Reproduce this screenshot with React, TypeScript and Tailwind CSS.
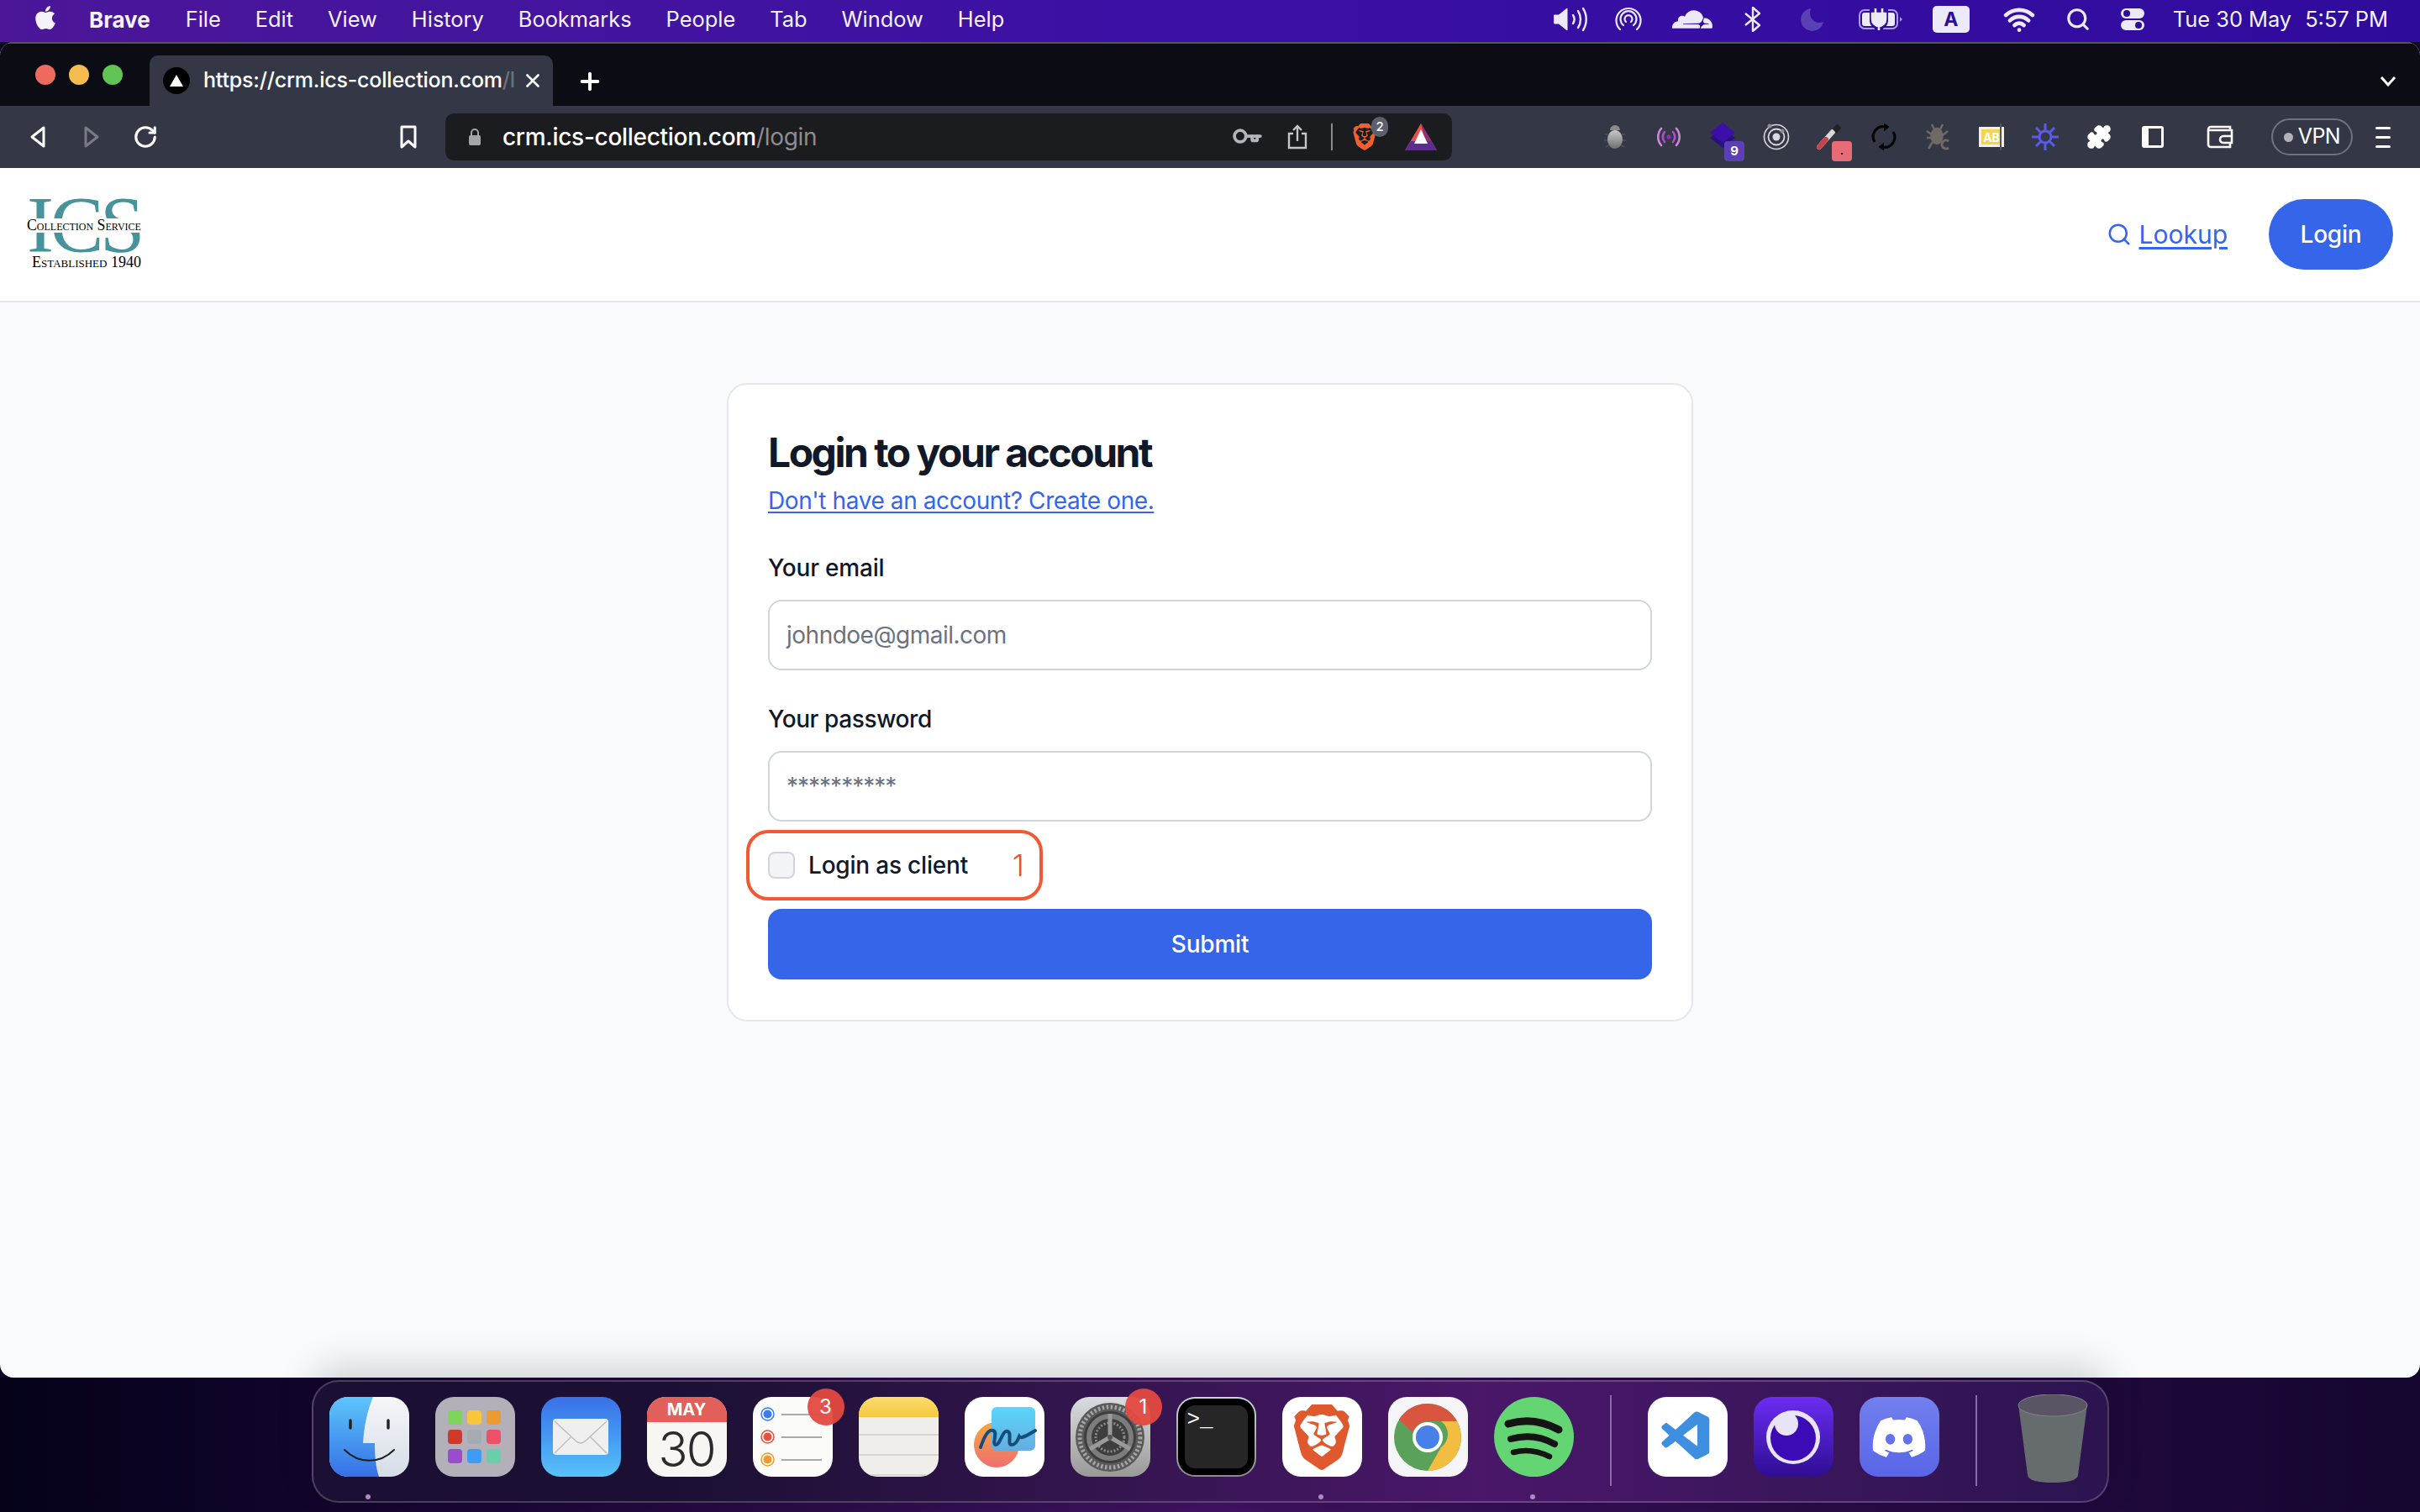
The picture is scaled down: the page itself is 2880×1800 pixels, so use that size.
import { Key, Plus, Puzzle, RotateCw, Search, Wifi, X } from 'lucide-react'
import { FaApple, FaDiscord } from 'react-icons/fa'
import { SiBrave, SiCloudflare } from 'react-icons/si'
import { VscVscode } from 'react-icons/vsc'
import type { ReactNode } from 'react'

const menuItems = ['File', 'Edit', 'View', 'History', 'Bookmarks', 'People', 'Tab', 'Window', 'Help']

function Speaker() {
  return (
    <svg width="41" height="30" viewBox="0 0 41 30" fill="none" stroke="#ece9f8" strokeWidth="2.4" strokeLinecap="round">
      <path d="M1 10h5l10-8v26L6 20H1z" fill="#ece9f8" strokeWidth="1" strokeLinejoin="round" />
      <path d="M23 10c2 3 2 7 0 10M29 5c4 6 4 14 0 20M35 2c5 8 5 18 0 26" />
    </svg>
  )
}

function AirDrop() {
  return (
    <svg width="32" height="30" viewBox="0 0 32 30" fill="none" stroke="#ece9f8" strokeWidth="2.2" strokeLinecap="round">
      <path d="M6 27a14.5 14.5 0 1 1 20 0" />
      <path d="M10 22a9.5 9.5 0 1 1 12 0" />
      <path d="M13 18a4.5 4.5 0 1 1 6 0" />
    </svg>
  )
}

function BluetoothMark() {
  return (
    <svg width="20" height="30" viewBox="0 0 20 30" fill="none" stroke="#ece9f8" strokeWidth="2.4" strokeLinejoin="round">
      <path d="M1 8l17 14-8 7V1l8 7L1 22" />
    </svg>
  )
}

function MoonMark() {
  return (
    <svg width="28" height="28" viewBox="0 0 28 28">
      <path d="M12 1A13.5 13.5 0 1 0 27 17C18 21 8 13 12 1z" fill="#5a40b5" />
    </svg>
  )
}

function Battery() {
  return (
    <svg width="52" height="26" viewBox="0 0 52 26" fill="none">
      <rect x="1" y="2" width="45" height="22" rx="6" stroke="#a89ce0" strokeWidth="2" />
      <rect x="4" y="5" width="39" height="16" rx="3" fill="#ece9f8" />
      <path d="M49 10l3 3-3 3z" fill="#a89ce0" />
      <path d="M13 0h22v15a11 11 0 0 1-6 9v2H19v-2a11 11 0 0 1-6-9z" fill="#2d0c9c" />
      <path d="M20 0v6M28 0v6M16 6h16v7a8 8 0 0 1-16 0zM24 20v6" fill="#ece9f8" stroke="#ece9f8" strokeWidth="2.6" />
    </svg>
  )
}

function ControlCenter() {
  return (
    <svg width="28" height="28" viewBox="0 0 28 28">
      <rect x="0" y="1" width="28" height="12" rx="6" fill="#ece9f8" />
      <circle cx="7" cy="7" r="4" fill="#2d0c9c" />
      <rect x="0" y="15" width="28" height="12" rx="6" fill="#ece9f8" />
      <circle cx="21" cy="21" r="4" fill="#2d0c9c" />
    </svg>
  )
}

function MenuBar() {
  return (
    <div className="h-[50px] shrink-0 flex items-center justify-between pl-[38px] pr-[38px] pb-[4px] bg-gradient-to-r from-[#4b1699] via-[#3a0fa5] to-[#2f0b9c] text-[#f4f2fb] text-[25.4px] font-['Inter',sans-serif]">
      <div className="flex items-center">
        <FaApple size={32} className="mr-[36px] -mt-[4px]" />
        <span className="font-bold text-[26px] mr-[42px]">Brave</span>
        <div className="flex items-center gap-[41px]">
          {menuItems.map((item) => (
            <span key={item}>{item}</span>
          ))}
        </div>
      </div>
      <div className="flex items-center">
        <div className="flex items-center mr-[34px]">
          <Speaker />
          <span className="ml-[32px]"><AirDrop /></span>
          <span className="ml-[36px]"><SiCloudflare size={48} color="#ece9f8" /></span>
          <span className="ml-[38px]"><BluetoothMark /></span>
          <span className="ml-[47px]"><MoonMark /></span>
          <span className="ml-[41px]"><Battery /></span>
          <span className="ml-[36px] w-[44px] h-[32px] rounded-[5px] bg-[#ece9f8] text-[#2d0c9c] text-[23px] font-bold flex items-center justify-center">A</span>
          <span className="ml-[40px]"><Wifi size={38} strokeWidth={3} color="#ece9f8" /></span>
          <span className="ml-[36px]"><Search size={30} strokeWidth={2.5} color="#ece9f8" /></span>
          <span className="ml-[36px]"><ControlCenter /></span>
        </div>
        <div className="flex gap-[16px] whitespace-nowrap">
          <span>Tue 30 May</span>
          <span>5:57 PM</span>
        </div>
      </div>
    </div>
  )
}

function TabStrip() {
  return (
    <div className="h-[76px] shrink-0 bg-[#0c0d14] flex items-end pl-[42px] relative border-t-2 border-[#55565c]">
      <div className="flex gap-[16px] h-[24px] self-center mr-[16px]">
        <span className="w-[24px] h-[24px] rounded-full bg-[#ee6a5f]" />
        <span className="w-[24px] h-[24px] rounded-full bg-[#f5bd4f]" />
        <span className="w-[24px] h-[24px] rounded-full bg-[#61c454]" />
      </div>
      <div className="w-[480px] h-[60px] ml-[16px] bg-[#343846] rounded-t-[10px] flex items-center pl-[16px] text-white text-[25px] font-medium tracking-[-0.2px] font-['Inter',sans-serif]">
        <span className="w-[32px] h-[32px] rounded-full bg-black flex items-center justify-center shrink-0">
          <span className="w-0 h-0 border-x-[8px] border-x-transparent border-b-[14px] border-b-white" />
        </span>
        <span className="w-[368px] ml-[16px] whitespace-nowrap">
          https://crm.ics-collection.com<span className="text-[#6f717a]">/l</span>
        </span>
        <X size={26} strokeWidth={2.5} className="ml-[11px] shrink-0" />
      </div>
      <Plus size={32} strokeWidth={3} color="white" className="ml-[28px] self-center mt-[16px]" />
      <svg className="ml-auto mr-[28px] self-center mt-[16px]" width="20" height="14" viewBox="0 0 20 14" fill="none" stroke="white" strokeWidth="3">
        <path d="M2 2l8 9 8-9" />
      </svg>
    </div>
  )
}

function ExtCell({ children, badge, badgeBg }: { children: ReactNode; badge?: string; badgeBg?: string }) {
  return (
    <div className="w-[64px] h-[40px] flex items-center justify-center relative shrink-0">
      {children}
      {badge && (
        <span className={`absolute -bottom-[9px] right-[6px] w-[24px] h-[24px] rounded-[4px] text-white text-[15px] font-bold flex items-center justify-center ${badgeBg}`}>
          {badge}
        </span>
      )}
    </div>
  )
}

function Toolbar() {
  return (
    <div className="h-[74px] shrink-0 bg-[#343846] flex items-center pl-[13px] font-['Inter',sans-serif]">
      <div className="w-[64px] flex justify-center">
        <svg width="20" height="28" viewBox="0 0 20 28" fill="none" stroke="white" strokeWidth="3" strokeLinejoin="round">
          <path d="M17 3v22L3 14z" />
        </svg>
      </div>
      <div className="w-[64px] flex justify-center">
        <svg width="20" height="28" viewBox="0 0 20 28" fill="none" stroke="#787b86" strokeWidth="3" strokeLinejoin="round">
          <path d="M3 3v22l14-11z" />
        </svg>
      </div>
      <div className="w-[64px] flex justify-center">
        <RotateCw size={30} color="white" strokeWidth={2.5} />
      </div>
      <div className="w-[64px] ml-[249px] flex justify-center">
        <svg width="20" height="28" viewBox="0 0 20 28" fill="none" stroke="white" strokeWidth="3" strokeLinejoin="round">
          <path d="M2 2h16v24l-8-7-8 7z" />
        </svg>
      </div>
      <div className="w-[1198px] h-[56px] ml-[12px] rounded-[10px] bg-[#1b1c20] flex items-center pl-[28px] pr-[18px]">
        <svg width="14" height="20" viewBox="0 0 14 20" fill="#a3a5a9">
          <rect x="0" y="8" width="14" height="12" rx="2" />
          <path d="M3 9V5a4 4 0 0 1 8 0v4" fill="none" stroke="#a3a5a9" strokeWidth="2" />
        </svg>
        <span className="ml-[26px] text-[28px] font-medium tracking-[-0.3px] text-white">
          crm.ics-collection.com<span className="text-[#8b8d93] font-normal">/login</span>
        </span>
        <div className="ml-auto flex items-center">
          <Key size={30} color="#b3b5ba" strokeWidth={3} className="rotate-45 mr-[34px]" />
          <svg width="24" height="30" viewBox="0 0 24 30" fill="none" stroke="#c4c6ca" strokeWidth="2.4" className="mr-[28px]">
            <path d="M7 11H2v17h20V11h-5M12 20V2M7 7l5-5 5 5" />
          </svg>
          <span className="w-[2px] h-[32px] bg-[#8a8c91] mr-[22px]" />
          <div className="relative mr-[32px]">
            <SiBrave size={32} color="#f1602c" />
            <span className="absolute -top-[8px] -right-[12px] w-[20px] h-[24px] rounded-full bg-[#5d606b] text-white text-[15px] font-medium flex items-center justify-center">2</span>
          </div>
          <svg width="38" height="32" viewBox="0 0 38 32">
            <path d="M19 0L38 32H0z" fill="#e8504a" />
            <path d="M19 0L38 32H27z" fill="#8f2f78" />
            <path d="M0 32l7-11h24l7 11z" fill="#5b2d8c" />
            <path d="M19 7L27 24H11z" fill="white" />
          </svg>
        </div>
      </div>
      <div className="ml-[162px] flex items-center">
        <ExtCell>
          <svg width="28" height="30" viewBox="0 0 28 30" fill="none">
            <defs>
              <linearGradient id="beetle" x1="0" y1="0" x2="0" y2="1">
                <stop offset="0" stopColor="#c8c8c8" />
                <stop offset="1" stopColor="#6f6f6f" />
              </linearGradient>
            </defs>
            <path d="M2 12h5M21 12h5M1 19h6M21 19h6M3 27l5-3M25 27l-5-3" stroke="#4c4f58" strokeWidth="1.5" />
            <path d="M8 7a6 6 0 0 1 12 0z" fill="#8c8c8c" />
            <ellipse cx="14" cy="18" rx="9" ry="11" fill="url(#beetle)" />
          </svg>
        </ExtCell>
        <ExtCell>
          <svg width="30" height="24" viewBox="0 0 30 24" fill="none" strokeLinecap="round" strokeWidth="2.6">
            <path d="M6 2c-5 6-5 14 0 20M24 2c5 6 5 14 0 20" stroke="#cf86dc" />
            <path d="M10 6c-3 4-3 8 0 12M20 6c3 4 3 8 0 12" stroke="#a84fcb" />
            <circle cx="15" cy="12" r="2.5" fill="#8f33b5" />
          </svg>
        </ExtCell>
        <ExtCell badge="9" badgeBg="bg-[#5b3fb5]">
          <svg width="34" height="34" viewBox="0 0 34 34">
            <path d="M2 18l15-11 15 11-15 12z" fill="#2a0f80" />
            <path d="M2 12L17 0l15 12-15 12z" fill="#3c10a8" />
          </svg>
        </ExtCell>
        <ExtCell>
          <svg width="32" height="32" viewBox="0 0 32 32" fill="none" stroke="#d8d9dc">
            <circle cx="16" cy="16" r="14.5" strokeWidth="1.6" />
            <circle cx="16" cy="16" r="9.5" strokeWidth="1.8" />
            <circle cx="16" cy="16" r="4.5" fill="#d8d9dc" strokeWidth="0" />
            <circle cx="8" cy="3" r="2.5" fill="#8c8e94" strokeWidth="0" />
            <circle cx="23" cy="9" r="2.5" fill="#8c8e94" strokeWidth="0" />
          </svg>
        </ExtCell>
        <ExtCell badge="." badgeBg="bg-[#ea6b78] !text-black !text-[12px]">
          <svg width="32" height="32" viewBox="0 0 32 32" fill="none">
            <path d="M3 28L19 10" stroke="#d9d9d9" strokeWidth="6" strokeLinecap="round" />
            <path d="M3 28L11 19" stroke="#c9434c" strokeWidth="6" strokeLinecap="round" />
            <path d="M21 9l6-6" stroke="#232323" strokeWidth="7" />
          </svg>
        </ExtCell>
        <ExtCell>
          <svg width="30" height="32" viewBox="0 0 30 32" fill="none" stroke="#050505" strokeWidth="3.2">
            <path d="M4 22A12 12 0 0 1 17 4M26 10a12 12 0 0 1-13 18" />
            <path d="M15 0l6 4-6 5M15 23l-6 5 6 4" fill="#050505" strokeWidth="1" />
          </svg>
        </ExtCell>
        <ExtCell>
          <svg width="28" height="32" viewBox="0 0 28 32" fill="none" stroke="#6f6a66" strokeWidth="2.4">
            <path d="M7 1l3 6M20 1l-3 6M1 9l7 5M26 9l-6 5M1 17h7M3 30l5-8" />
            <ellipse cx="13" cy="15" rx="6.5" ry="9" fill="#6f6a66" />
            <path d="M27 21a5 5 0 1 0 0 8" strokeWidth="3" />
          </svg>
        </ExtCell>
        <ExtCell>
          <div className="relative w-[30px] h-[24px] bg-[#f4d54d] border-[3px] border-[#f2f0ea] text-[14px] font-bold text-white flex items-center justify-center">
            AB
            <span className="absolute -top-[7px] right-[0px] w-[2px] h-[32px] bg-[#55555c]" />
          </div>
        </ExtCell>
        <ExtCell>
          <svg width="32" height="32" viewBox="0 0 32 32" fill="none" stroke="#5b5be8" strokeWidth="3">
            <circle cx="16" cy="16" r="7" />
            <path d="M16 0v9M16 23v9M0 16h9M23 16h9M5 5l6 6M21 21l6 6M27 5l-6 6M11 21l-6 6" />
          </svg>
        </ExtCell>
        <ExtCell>
          <Puzzle size={30} color="white" fill="white" />
        </ExtCell>
        <ExtCell>
          <div className="w-[26px] h-[26px] border-[3px] border-white rounded-[3px] border-l-[8px]" />
        </ExtCell>
        <div className="ml-[16px]">
          <ExtCell>
            <svg width="32" height="28" viewBox="0 0 32 28" fill="none" stroke="white" strokeWidth="2.6">
              <path d="M28 6V2H5a3 3 0 0 0-3 3v18a3 3 0 0 0 3 3h23v-5" />
              <path d="M2 6h28v15H20a4 4 0 0 1 0-8h10" />
            </svg>
          </ExtCell>
        </div>
        <div className="ml-[29px] w-[97px] h-[44px] rounded-full border-2 border-[#6f7380] flex items-center justify-center gap-[6px] text-white text-[25px] tracking-[-0.6px] shrink-0">
          <span className="w-[11px] h-[11px] rounded-full bg-[#b0b3bc]" />
          VPN
        </div>
        <div className="ml-[27px] w-[18px] flex flex-col gap-[8px]">
          <span className="h-[3px] rounded bg-white" />
          <span className="h-[3px] rounded bg-white" />
          <span className="h-[3px] rounded bg-white" />
        </div>
      </div>
    </div>
  )
}

function Logo() {
  return (
    <div className="relative w-[142px] h-[88px] font-['Liberation_Serif',serif] text-black">
      <div className="text-[96px] leading-[66px] tracking-[-4.5px] text-[#46939b] h-[66px]">ICS</div>
      <div className="absolute left-0 top-[25px] w-[142px] bg-white text-[17.8px] leading-[17px] whitespace-nowrap [font-variant-caps:small-caps]">
        Collection Service
      </div>
      <div className="mt-[1px] ml-[6px] text-[18px] leading-[20px] whitespace-nowrap [font-variant-caps:small-caps]">
        Established 1940
      </div>
    </div>
  )
}

function Header() {
  return (
    <div className="h-[160px] shrink-0 bg-white border-b-2 border-[#e5e7eb] flex items-center justify-between pl-[32px] pr-[32px]">
      <Logo />
      <div className="flex items-center">
        <Search size={30} color="#3565e9" strokeWidth={2} className="mr-[8px]" />
        <a className="text-[30px] text-[#3565e9] underline underline-offset-[4px] mr-[49px]">Lookup</a>
        <button className="w-[148px] h-[84px] rounded-full bg-[#3565e9] text-white text-[28px] font-medium tracking-[-0.2px]">Login</button>
      </div>
    </div>
  )
}

function LoginCard() {
  return (
    <div className="w-[1150px] h-[760px] bg-white border-2 border-[#e5e7eb] rounded-[24px] px-[47px] pt-[45px] text-[#111827]">
      <h1 className="text-[48px] leading-[72px] font-bold tracking-[-2.5px]">Login to your account</h1>
      <a className="block text-[28px] leading-[42px] tracking-[-0.4px] text-[#3565e9] underline underline-offset-[3px]">Don't have an account? Create one.</a>
      <label className="block mt-[38px] text-[28px] leading-[42px] font-medium tracking-[-0.2px]">Your email</label>
      <div className="mt-[17px] h-[84px] rounded-[16px] border-2 border-[#d1d5db] flex items-center pl-[20px] text-[28px] tracking-[-0.5px] text-[#6b7280]">johndoe@gmail.com</div>
      <label className="block mt-[37px] text-[28px] leading-[42px] font-medium tracking-[-0.4px]">Your password</label>
      <div className="mt-[17px] h-[84px] rounded-[16px] border-2 border-[#d1d5db] flex items-center pl-[20px] text-[28px] tracking-[-1px] text-[#6b7280]">**********</div>
      <div className="relative mt-[31px] h-[42px] flex items-center">
        <span className="w-[32px] h-[32px] rounded-[8px] border-2 border-[#d1d5db] bg-[#f3f4f6]" />
        <span className="ml-[16px] text-[28px] font-medium tracking-[-0.2px]">Login as client</span>
        <div className="absolute -left-[26px] -top-[21px] w-[353px] h-[84px] rounded-[26px] border-[4px] border-[#ef5a32] flex items-center justify-end pr-[18px] text-[36px] font-light text-[#ef4a36]">1</div>
      </div>
      <button className="mt-[31px] w-full h-[84px] rounded-[16px] bg-[#3565e9] text-white text-[28px] font-medium tracking-[-0.2px]">Submit</button>
    </div>
  )
}

function DockIcon({ children, className, dot, badge }: { children?: ReactNode; className?: string; dot?: boolean; badge?: string }) {
  return (
    <div className={`relative w-[95px] h-[95px] shrink-0 rounded-[22px] ${className ?? ''}`}>
      {children}
      {badge && (
        <span className="absolute -top-[10px] -right-[14px] w-[44px] h-[44px] rounded-full bg-[#e4493f]/95 text-white text-[24px] flex items-center justify-center">{badge}</span>
      )}
      {dot && <span className="absolute -bottom-[27px] left-[43px] w-[6px] h-[6px] rounded-full bg-[#a58cc4]" />}
    </div>
  )
}

function DockSeparator() {
  return <span className="w-[2px] h-[108px] mx-[12px] -mt-[2px] bg-[#8a6aa8] shrink-0" />
}

function Dock() {
  return (
    <div className="h-[160px] shrink-0 pt-[3px] bg-gradient-to-r from-[#05021a] via-[#3f1260] to-[#14062f]">
      <div className="relative z-10 mx-auto w-[2139px] h-[146px] pl-[19px] pt-[18px] rounded-[32px] border-2 border-[#ffffff33] bg-gradient-to-r from-[#1b1033] from-20% via-[#4a1769] via-65% to-[#2c1450] shadow-[0_-16px_44px_rgba(0,0,0,0.16)] flex gap-[31px]">
        <DockIcon dot>
          <svg viewBox="0 0 95 95" className="w-full h-full">
            <defs>
              <linearGradient id="finderBlue" x1="0" y1="0" x2="0" y2="1">
                <stop offset="0" stopColor="#5cc6fb" />
                <stop offset="1" stopColor="#3570e6" />
              </linearGradient>
              <linearGradient id="finderLight" x1="0" y1="0" x2="0" y2="1">
                <stop offset="0" stopColor="#f6f6f8" />
                <stop offset="1" stopColor="#d5dde8" />
              </linearGradient>
            </defs>
            <rect width="95" height="95" rx="22" fill="url(#finderLight)" />
            <path d="M22 0h30C45 16 41 36 40 55h14c0 14 1 28 5 40H22A22 22 0 0 1 0 73V22A22 22 0 0 1 22 0z" fill="url(#finderBlue)" />
            <path d="M18 63c17 17 42 17 59 0" fill="none" stroke="#1d1d22" strokeWidth="2" strokeLinecap="round" />
            <path d="M25 28v9M70 28v9" stroke="#222" strokeWidth="3.4" strokeLinecap="round" />
          </svg>
        </DockIcon>
        <DockIcon className="bg-[#b3b0ba] grid grid-cols-[repeat(3,17px)] grid-rows-[repeat(3,17px)] gap-[6px] pl-[15px] pt-[16px]">
          {['bg-[#7bd65a]', 'bg-[#f8c63c]', 'bg-[#ee9a33]', 'bg-[#d03a2b]', 'bg-[#a3acb1]', 'bg-[#ee5068]', 'bg-[#9a4ccf]', 'bg-[#3e9cf7]', 'bg-[#68cfa8]'].map((c) => (
            <span key={c} className={`rounded-[4px] ${c}`} />
          ))}
        </DockIcon>
        <DockIcon className="bg-gradient-to-b from-[#3a6fe8] to-[#58c2f9] flex items-center justify-center">
          <svg width="66" height="43" viewBox="0 0 66 43">
            <rect width="66" height="43" rx="4" fill="#efefef" />
            <path d="M2 3l26 24q5 4 10 0L64 3M2 41l20-20M64 41L44 21" fill="none" stroke="#bdbdbd" strokeWidth="1.4" />
          </svg>
        </DockIcon>
        <DockIcon className="bg-[#f7f6f3] flex flex-col items-center">
          <span className="w-full h-[30px] rounded-t-[22px] bg-[#e2605a] text-white text-[20px] leading-[30px] text-center font-bold shrink-0">MAY</span>
          <span className="text-[58px] leading-[64px] font-light tracking-[-2px] text-[#2b2b2b]">30</span>
        </DockIcon>
        <DockIcon badge="3" className="bg-[#fbfbf9] flex flex-col justify-center gap-[10px] pl-[9px]">
          {['#3b7dec', '#e8503f', '#ee9b2e'].map((c) => (
            <div key={c} className="flex items-center gap-[8px]">
              <svg width="17" height="17" viewBox="0 0 17 17">
                <circle cx="8.5" cy="8.5" r="7.5" fill="none" stroke={c} strokeWidth="1.5" />
                <circle cx="8.5" cy="8.5" r="5" fill={c} />
              </svg>
              <span className="w-[48px] h-[2px] bg-[#aaaaaa]" />
            </div>
          ))}
        </DockIcon>
        <DockIcon className="overflow-hidden bg-[#efeeea] flex flex-col">
          <span className="h-[24px] bg-gradient-to-b from-[#fbdc6c] to-[#f6c93f] shrink-0" />
          <span className="h-[2px] bg-[#d6d6d2] mt-[20px] shrink-0" />
          <span className="h-[2px] bg-[#d6d6d2] mt-[22px] shrink-0" />
          <span className="h-[2px] bg-[#d6d6d2] mt-[22px] shrink-0" />
        </DockIcon>
        <DockIcon className="bg-white overflow-hidden">
          <svg viewBox="0 0 95 95" className="w-full h-full">
            <defs>
              <linearGradient id="freeOrange" x1="0" y1="0" x2="0" y2="1">
                <stop offset="0" stopColor="#f3a83f" />
                <stop offset="1" stopColor="#ef6f70" />
              </linearGradient>
              <linearGradient id="freeBlue" x1="0" y1="0" x2="0" y2="1">
                <stop offset="0" stopColor="#5ad6fb" />
                <stop offset="1" stopColor="#63aee0" />
              </linearGradient>
            </defs>
            <circle cx="38" cy="57" r="27" fill="url(#freeOrange)" />
            <rect x="32" y="12" width="52" height="52" rx="6" fill="url(#freeBlue)" />
            <path d="M19 60c4-12 9-22 15-20s-2 16 3 17 8-18 14-16-1 16 5 16 8-8 9-10c2 3 6 1 19-7" fill="none" stroke="#174d7a" strokeWidth="4" strokeLinecap="round" />
          </svg>
        </DockIcon>
        <DockIcon badge="1" className="bg-gradient-to-b from-[#d9dde0] to-[#9a9a98] flex items-center justify-center">
          <svg width="84" height="84" viewBox="0 0 84 84" fill="none">
            <circle cx="42" cy="42" r="41" fill="#5b5b5b" />
            <circle cx="42" cy="42" r="36" stroke="#a5a5a5" strokeWidth="5" strokeDasharray="2.5 2.5" />
            <circle cx="42" cy="42" r="31" fill="#3e3e3e" />
            <circle cx="42" cy="42" r="25" stroke="#7c7c7c" strokeWidth="6" />
            <circle cx="42" cy="42" r="17" stroke="#8a8a8a" strokeWidth="3" strokeDasharray="2 2" />
            <path d="M42 42V14M42 42L18 56M42 42l24 14" stroke="#9a9a9a" strokeWidth="5" />
            <circle cx="42" cy="42" r="3" fill="#555555" />
          </svg>
        </DockIcon>
        <DockIcon className="bg-gradient-to-b from-[#c6d4da] to-[#8a8d8e] p-[2px]">
          <div className="w-full h-full rounded-[20px] bg-black p-[8px]">
            <div className="w-full h-full rounded-[12px] bg-[#262626] text-white text-[26px] leading-[26px] font-['Liberation_Mono',monospace] pl-[3px] pt-[4px]">&gt;_</div>
          </div>
        </DockIcon>
        <DockIcon dot className="bg-white flex items-center justify-center">
          <SiBrave size={78} color="#e0582e" />
        </DockIcon>
        <DockIcon className="bg-[#f5f4f6] flex items-center justify-center">
          <svg width="82" height="82" viewBox="0 0 82 82">
            <circle cx="41" cy="41" r="40" fill="#5aa259" />
            <path d="M41 1a40 40 0 0 1 35 21H41a19 19 0 0 0-18 13L7 20A40 40 0 0 1 41 1z" fill="#d9553f" />
            <path d="M76 22a40 40 0 0 1-35 59l16-28a19 19 0 0 0 0-31z" fill="#f3bd42" />
            <circle cx="41" cy="41" r="18" fill="white" />
            <circle cx="41" cy="41" r="14" fill="#4680e8" />
          </svg>
        </DockIcon>
        <DockIcon dot className="rounded-full bg-[#63d572] flex items-center justify-center">
          <svg width="70" height="56" viewBox="0 0 70 56" fill="none" stroke="#141414" strokeLinecap="round">
            <path d="M5 12c20-6 40-4 60 7" strokeWidth="9" />
            <path d="M8 30c18-5 36-3 52 6" strokeWidth="8" />
            <path d="M11 46c15-4 29-2 43 5" strokeWidth="6.5" />
          </svg>
        </DockIcon>
        <DockSeparator />
        <DockIcon className="bg-white flex items-center justify-center">
          <VscVscode size={70} color="#3f8fe0" />
        </DockIcon>
        <DockIcon className="bg-gradient-to-b from-[#6c2cf2] to-[#2f0d94] flex items-center justify-center">
          <svg width="68" height="68" viewBox="0 0 68 68">
            <circle cx="34" cy="34" r="32" fill="#e8e4f6" />
            <circle cx="34" cy="35" r="27" fill="#3c0bb5" />
            <circle cx="26" cy="18" r="14" fill="#e8e4f6" />
          </svg>
        </DockIcon>
        <DockIcon className="bg-gradient-to-b from-[#7280ee] to-[#5865e8] flex items-center justify-center">
          <FaDiscord size={68} color="white" />
        </DockIcon>
        <DockSeparator />
        <div className="w-[95px] h-[105px] -mt-[3px] flex justify-center shrink-0">
          <svg width="84" height="105" viewBox="0 0 84 105">
            <path d="M1 12l11 84c1 7 14 9 30 9s29-2 30-9l11-84z" fill="#666b6e" />
            <ellipse cx="42" cy="13" rx="41" ry="13" fill="#5a5464" stroke="#80848a" strokeWidth="1" />
          </svg>
        </div>
      </div>
    </div>
  )
}

export default function App() {
  return (
    <div className="w-[2880px] h-[1800px] flex flex-col overflow-hidden bg-[#100626] font-['Inter',sans-serif]">
      <MenuBar />
      <div className="h-[1590px] shrink-0 rounded-[16px] overflow-hidden flex flex-col bg-[#f9fafb]">
        <TabStrip />
        <Toolbar />
        <Header />
        <div className="flex-1 flex justify-center pt-[96px]">
          <LoginCard />
        </div>
      </div>
      <Dock />
    </div>
  )
}
